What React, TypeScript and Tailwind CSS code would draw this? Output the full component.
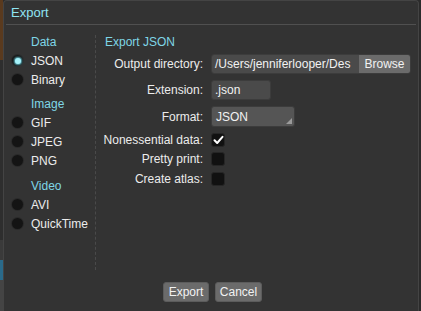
import React from 'react';

const font = { fontFamily: '"Liberation Sans", Arial, sans-serif' };

function Radio({ label, checked }: { label: string; checked?: boolean }) {
  return (
    <div className="flex h-[19px] items-center">
      <span className="ml-[8px] flex h-[11px] w-[11px] items-center justify-center rounded-full bg-[#141414] shadow-[0_0_0_1px_#2a2a2a]">
        {checked && <span className="h-[6px] w-[6px] rounded-full bg-[#a6f2fa] shadow-[0_0_2px_1px_#5fb8c4]" />}
      </span>
      <span className="ml-[8px] text-[#ececec]">{label}</span>
    </div>
  );
}

function Heading({ children }: { children: React.ReactNode }) {
  return <div className="flex h-[19px] items-center pl-[27px] text-[#7fd6e6]">{children}</div>;
}

function Check({ checked }: { checked?: boolean }) {
  return (
    <span className="flex h-[14px] w-[14px] items-center justify-center rounded-[3px] bg-[#111111] border border-[#262626]">
      {checked && (
        <svg width="11" height="10" viewBox="0 0 11 10">
          <path d="M1.5 5.2 L4.2 8 L9.5 1.8" fill="none" stroke="#ffffff" strokeWidth="2" strokeLinecap="round" strokeLinejoin="round" />
        </svg>
      )}
    </span>
  );
}

function Row({ label, children, className = '' }: { label: string; children: React.ReactNode; className?: string }) {
  return (
    <div className={`flex items-center ${className}`}>
      <span className="w-[107px] shrink-0 text-right text-[#ececec]">{label}</span>
      <div className="ml-[8px] flex items-center">{children}</div>
    </div>
  );
}

export default function App() {
  return (
    <div className="flex h-[311px] w-[421px] overflow-hidden bg-[#2b2b2b] text-[12px] leading-none" style={font}>
      {/* app behind the dialog */}
      <div className="flex w-[3px] flex-col">
        <div className="h-[60px] bg-[#5a3a1e]" />
        <div className="h-[180px] bg-[#2e2e2e]" />
        <div className="h-[20px] bg-[#3a3a3a]" />
        <div className="h-[20px] bg-[#2a6a8a]" />
        <div className="flex-1 bg-[#444444]" />
      </div>

      <div className="flex w-[416px] flex-col rounded-tl-[4px] rounded-tr-[4px] border-l border-r border-t border-[#444444] bg-[#333333]">
        {/* title */}
        <div className="mx-[2px] flex h-[24px] items-center border-b border-[#505050] pl-[5px] text-[13px] text-[#8fe4f2]">
          Export
        </div>

        <div className="flex flex-1 flex-col">
          <div className="flex">
            {/* left column */}
            <div className="w-[91px] pt-[7px]">
              <Heading>Data</Heading>
              <Radio label="JSON" checked />
              <Radio label="Binary" />
              <div className="h-[5px]" />
              <Heading>Image</Heading>
              <Radio label="GIF" />
              <Radio label="JPEG" />
              <Radio label="PNG" />
              <div className="h-[6px]" />
              <Heading>Video</Heading>
              <Radio label="AVI" />
              <Radio label="QuickTime" />
            </div>

            {/* separator */}
            <div className="mt-[10px] h-[235px] border-l border-dashed border-[#4a4a4a]" />

            {/* right column */}
            <div className="flex-1 pt-[7px]">
              <div className="flex h-[19px] items-center pl-[9px] text-[#7fd6e6]">Export JSON</div>
              <Row label="Output directory:" className="mt-[3px]">
                <div className="flex h-[20px] w-[200px] overflow-hidden rounded-[3px] border border-[#3c3c3c]">
                  <div className="flex flex-1 items-center overflow-hidden whitespace-nowrap bg-[#4a4a4a] pl-[3px] text-[#f2f2f2]">
                    /Users/jenniferlooper/Des
                  </div>
                  <div className="flex w-[51px] items-center justify-center bg-[#6b6b6b] text-[#f2f2f2]">Browse</div>
                </div>
              </Row>
              <Row label="Extension:" className="mt-[6px]">
                <div className="flex h-[20px] w-[60px] items-center rounded-[3px] border border-[#3c3c3c] bg-[#4a4a4a] pl-[3px] text-[#f2f2f2]">
                  .json
                </div>
              </Row>
              <Row label="Format:" className="mt-[6px]">
                <div className="relative flex h-[21px] w-[84px] items-center rounded-[3px] border border-[#3c3c3c] bg-[#555555] pl-[4px] text-[#f2f2f2]">
                  JSON
                  <svg className="absolute bottom-[2px] right-[2px]" width="6" height="6" viewBox="0 0 6 6">
                    <path d="M6 0 L6 6 L0 6 Z" fill="#9a9a9a" />
                  </svg>
                </div>
              </Row>
              <Row label="Nonessential data:" className="mt-[6px] h-[14px]">
                <Check checked />
              </Row>
              <Row label="Pretty print:" className="mt-[5px] h-[14px]">
                <Check />
              </Row>
              <Row label="Create atlas:" className="mt-[6px] h-[14px]">
                <Check />
              </Row>
            </div>
          </div>

          {/* buttons */}
          <div className="mt-[12px] flex justify-center gap-[6px] pl-[3px]">
            <button className="h-[20px] w-[46px] rounded-[3px] border border-[#5c5c5c] bg-[#6b6b6b] text-[12px] text-[#f2f2f2]">Export</button>
            <button className="h-[20px] w-[47px] rounded-[3px] border border-[#5c5c5c] bg-[#6b6b6b] text-[12px] text-[#f2f2f2]">Cancel</button>
          </div>
        </div>
      </div>
    </div>
  );
}
